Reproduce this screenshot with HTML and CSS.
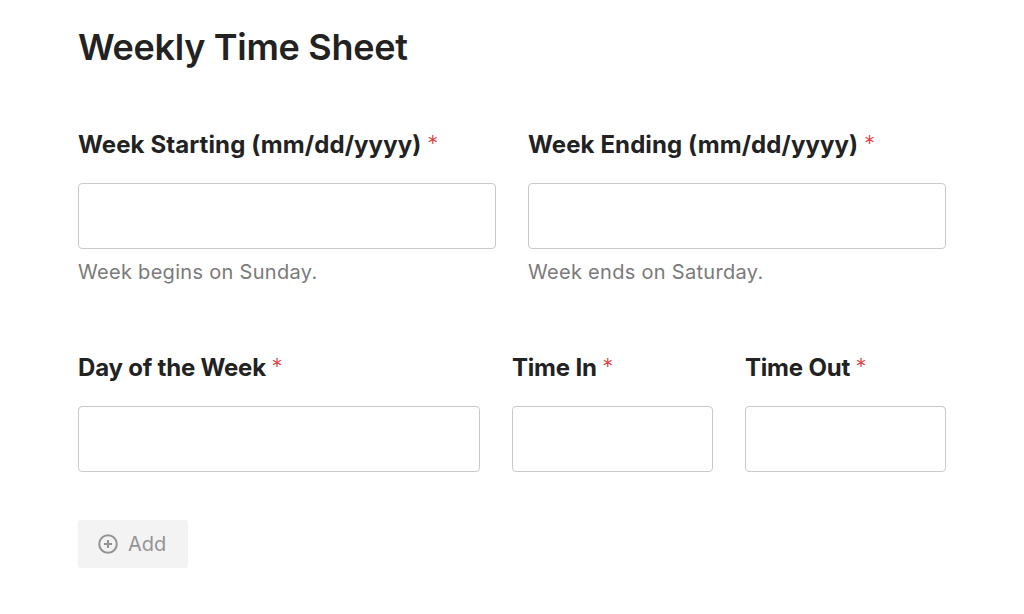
FILE: index.html
```html
<!DOCTYPE html>
<html lang="en">
<head>
    <meta charset="UTF-8">
    <meta name="viewport" content="width=device-width, initial-scale=1.0">
    <title>Weekly Time Sheet</title>
    <link rel="stylesheet" href="styles.css">
</head>
<body>
    <main class="sheet">
        <h1 class="sheet__title">Weekly Time Sheet</h1>

        <form class="sheet__form">
            <div class="row row--week">
                <div class="field">
                    <label class="field__label" for="weekStart">Week Starting (mm/dd/yyyy) <span class="req">*</span></label>
                    <input class="field__input" id="weekStart" type="text">
                    <p class="field__help">Week begins on Sunday.</p>
                </div>
                <div class="field">
                    <label class="field__label" for="weekEnd">Week Ending (mm/dd/yyyy) <span class="req">*</span></label>
                    <input class="field__input" id="weekEnd" type="text">
                    <p class="field__help">Week ends on Saturday.</p>
                </div>
            </div>

            <div class="row row--day">
                <div class="field">
                    <label class="field__label" for="day">Day of the Week <span class="req">*</span></label>
                    <input class="field__input" id="day" type="text">
                </div>
                <div class="field">
                    <label class="field__label" for="timeIn">Time In <span class="req">*</span></label>
                    <input class="field__input" id="timeIn" type="text">
                </div>
                <div class="field">
                    <label class="field__label" for="timeOut">Time Out <span class="req">*</span></label>
                    <input class="field__input" id="timeOut" type="text">
                </div>
            </div>

            <button class="add-btn" type="button">
                <svg class="add-btn__icon" viewBox="0 0 20 20" width="20" height="20">
                    <circle cx="10" cy="10" r="8.8" fill="none" stroke="currentColor" stroke-width="2"/>
                    <path d="M10 6v8M6 10h8" stroke="currentColor" stroke-width="2"/>
                </svg>
                Add
            </button>
        </form>
    </main>
</body>
</html>
```

FILE: styles.css
```css
*,
*::after,
*::before {
  box-sizing: border-box;
  margin: 0;
  padding: 0;
}

body {
  background: #fff;
  color: #222;
  font-family: Inter, 'Noto Sans', sans-serif;
}

.sheet {
  padding: 27px 78px 0;
}

.sheet__title {
  font-size: 36px;
  font-weight: 600;
  letter-spacing: -0.3px;
  line-height: 40px;
  color: #222;
}

.sheet__form {
  display: flex;
  flex-direction: column;
  margin-top: 64px;
}

.row {
  display: grid;
  column-gap: 32px;
}

.row--week {
  grid-template-columns: minmax(0, 1fr) minmax(0, 1fr);
}

.row--week .field__label {
  letter-spacing: 0.1px;
}

.row--day {
  grid-template-columns: minmax(0, 2fr) minmax(0, 1fr) minmax(0, 1fr);
  margin-top: 70px;
}

.field {
  display: flex;
  flex-direction: column;
  min-width: 0;
}

.field__label {
  font-size: 24px;
  font-weight: 700;
  line-height: 28px;
  letter-spacing: -0.2px;
  color: #222;
}

/* required marker: thin, small, raised */
.req {
  color: #e5393b;
  font-weight: 300;
  font-size: 22px;
  line-height: 0;
  vertical-align: 2px;
}

.field__input {
  width: 100%;
  height: 66px;
  margin-top: 24px;
  border: 1px solid #c9c9c9;
  border-radius: 4px;
  background: #fff;
  font: inherit;
}

.field__help {
  margin-top: 11px;
  font-size: 20px;
  line-height: 24px;
  letter-spacing: 0.3px;
  color: #7a7a7a;
}

.add-btn {
  display: flex;
  align-items: center;
  gap: 10px;
  align-self: flex-start;
  width: 110px;
  height: 48px;
  margin-top: 48px;
  padding: 0 20px;
  border: none;
  border-radius: 3px;
  background: #f3f3f3;
  color: #949494;
  font-family: inherit;
  font-size: 20px;
}

.add-btn__icon {
  flex: none;
}
```
